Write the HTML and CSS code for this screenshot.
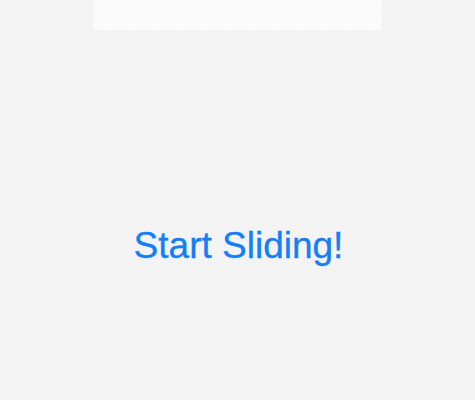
FILE: index.html
```html
<!DOCTYPE html>
<html>
<head>
<meta charset="utf-8">
<link rel="stylesheet" href="styles.css">
</head>
<body>
<div class="page">
  <div class="topbar"></div>
  <div class="stage">
    <button class="start">Start Sliding!</button>
  </div>
</div>
</body>
</html>
```
FILE: styles.css
```css
html, body {
  margin: 0;
  padding: 0;
  height: 100%;
}
body {
  background-color: #f3f4f3;
  background-image: radial-gradient(circle, #eeefee 0.6px, transparent 1px);
  background-size: 3px 3px;
  font-family: "Liberation Sans", Arial, sans-serif;
}
.page {
  display: flex;
  flex-direction: column;
  align-items: center;
  height: 400px;
}
.topbar {
  width: 288px;
  height: 30px;
  background: #fafbfa;
  margin-left: 1px;
}
.stage {
  flex: 1;
  display: flex;
  align-items: center;
  justify-content: center;
  width: 100%;
  padding-top: 61px;
  box-sizing: border-box;
}
.start {
  font-family: "Liberation Sans", Arial, sans-serif;
  font-size: 37px;
  color: #147dfa;
  background: none;
  border: none;
  padding: 0;
  margin-left: 2px;
  cursor: pointer;
  -webkit-text-stroke: 0.3px #147dfa;
}
```
